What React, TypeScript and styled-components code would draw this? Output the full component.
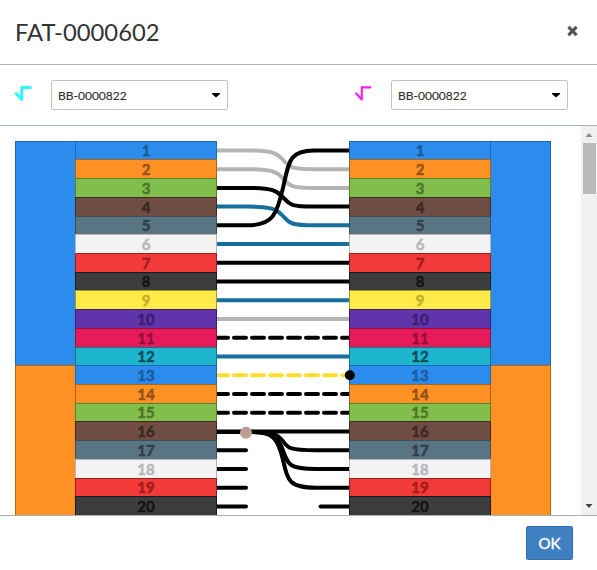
import React from "react";
import styled, { createGlobalStyle } from "styled-components";

const GlobalStyle = createGlobalStyle`
  *, *::before, *::after { box-sizing: border-box; }
  html, body { margin: 0; padding: 0; background: #fff; }
  body { font-family: Lato, "Liberation Sans", sans-serif; color: #333; overflow: hidden; }
`;

const Dialog = styled.div`
  display: flex;
  flex-direction: column;
  width: 597px;
  height: 570px;
  background: #fff;
`;

const Header = styled.header`
  display: flex;
  align-items: center;
  justify-content: space-between;
  flex: none;
  height: 65px;
  padding: 0 17px 0 15px;
  border-bottom: 1px solid #a3b1bd;
`;

const Title = styled.h1`
  margin: 0;
  font-size: 23.8px;
  font-weight: 400;
  line-height: 34px;
  color: #333;
`;

const CloseButton = styled.button`
  display: flex;
  padding: 0;
  margin-bottom: 4px;
  border: 0;
  background: none;
  color: #555;
`;

const Toolbar = styled.div`
  display: grid;
  grid-template-columns: 340px 1fr;
  flex: none;
  height: 61px;
  border-bottom: 1px solid #a3b1bd;
`;

const Picker = styled.div`
  display: flex;
  align-items: center;
  padding-left: 13px;
  gap: 16px;
`;

const Select = styled.button`
  display: flex;
  align-items: center;
  justify-content: space-between;
  width: 177px;
  height: 30px;
  padding: 0 7px 0 6px;
  border: 1px solid #c3c3c3;
  border-radius: 2px;
  background: #fff;
  font: 400 12px Lato, "Liberation Sans", sans-serif;
  -webkit-text-stroke: 0.15px currentColor;
  color: #333;
`;

const Body = styled.main`
  display: flex;
  flex: none;
  justify-content: space-between;
  height: 390px;
  overflow: hidden;
  border-bottom: 1px solid #a3b1bd;
`;

const Splice = styled.div`
  display: grid;
  grid-template-columns: 60px 142px 132px 142px 60px;
  height: 374px;
  margin: 15px 0 0 15px;
  overflow: hidden;
`;

const Column = styled.div`
  display: flex;
  flex-direction: column;
`;

const Tube = styled.div<{ $h: number; $color: string; $edge: string; $side: "left" | "right" }>`
  flex: none;
  height: ${(p) => p.$h}px;
  background: ${(p) => p.$color};
  border-top: 1px solid ${(p) => p.$edge};
  border-${(p) => p.$side}: 1px solid ${(p) => p.$edge};
`;

const Fiber = styled.div<{ $h: number; $color: string; $edge: string; $ink: string }>`
  display: flex;
  align-items: center;
  justify-content: center;
  flex: none;
  height: ${(p) => p.$h}px;
  border: 1px solid ${(p) => p.$edge};
  border-bottom: 0;
  background: ${(p) => p.$color};
  color: ${(p) => p.$ink};
  font-size: 15px;
  font-weight: 700;
  line-height: 17px;
  -webkit-text-stroke: 0.5px currentColor;
`;

const Wires = styled.svg`
  display: block;
  position: relative;
  z-index: 1;
  overflow: visible;
`;

const Scrollbar = styled.div`
  display: flex;
  flex-direction: column;
  align-items: center;
  width: 16px;
  background: #f0f0f0;
`;

const Thumb = styled.div`
  width: 13px;
  height: 51px;
  margin-bottom: auto;
  background: #bababa;
`;

const ScrollArrow = styled.svg`
  flex: none;
  width: 16px;
  height: 17px;
`;

const Footer = styled.footer`
  display: flex;
  justify-content: flex-end;
  padding: 10px 24px 0 0;
`;

const OkButton = styled.button`
  width: 47px;
  height: 34px;
  padding: 0;
  border: 1px solid #2e71b3;
  border-radius: 2px;
  background: #4080c1;
  color: #fff;
  font: 400 15px Lato, "Liberation Sans", sans-serif;
  -webkit-text-stroke: 0.4px currentColor;
`;

type Shade = { color: string; edge: string; ink: string };

const shades: Shade[] = [
  { color: "#2b8ced", edge: "#1f68b2", ink: "#1c5a98" },
  { color: "#ff9024", edge: "#a5651f", ink: "#935316" },
  { color: "#82be4b", edge: "#54852c", ink: "#4d742a" },
  { color: "#704d42", edge: "#3f2b25", ink: "#3a2823" },
  { color: "#597482", edge: "#3a4f5a", ink: "#2f4049" },
  { color: "#f3f3f3", edge: "#b6b6b6", ink: "#b8b8b8" },
  { color: "#f23b38", edge: "#95201e", ink: "#a51a1a" },
  { color: "#3d3d3d", edge: "#1a1a1a", ink: "#141414" },
  { color: "#ffea48", edge: "#a29a2c", ink: "#c2b02c" },
  { color: "#6034ab", edge: "#3c1f70", ink: "#3b1d70" },
  { color: "#e71b5c", edge: "#941039", ink: "#94103a" },
  { color: "#1eb5cf", edge: "#127486", ink: "#0d4e5b" },
];

const PITCH = 18.72;
const rowTop = (i: number) => Math.floor(141.2 + PITCH * i) - 141;
const rows = Array.from({ length: 20 }, (_, i) => ({
  label: i + 1,
  height: rowTop(i + 1) - rowTop(i),
  shade: shades[i % 12],
}));

const mid = (n: number) => 9.4 + 18.74 * (n - 1);

const bend = (from: number, to: number) => {
  const a = mid(from);
  const b = mid(to);
  const d = b - a;
  return `M-1 ${a} H30 C56 ${a} 60 ${a + d * 0.15} 66 ${a + d * 0.5} S72 ${b} 97 ${b} H134`;
};

const branch = (to: number) => {
  const a = mid(16) + 0.6;
  const b = mid(to);
  const d = b - a;
  return `M29 ${a} H36 C56 ${a} 61 ${a + d * 0.12} 66 ${a + d * 0.5} S72 ${b} 99 ${b} H134`;
};

const straight = [
  { n: 6, color: "#176fa0" },
  { n: 7, color: "#000" },
  { n: 8, color: "#000" },
  { n: 9, color: "#176fa0" },
  { n: 10, color: "#b4b4b4" },
  { n: 12, color: "#176fa0" },
  { n: 16, color: "#000" },
];

const dashed = [
  { n: 11, color: "#000" },
  { n: 13, color: "#fadf2c" },
  { n: 14, color: "#000" },
  { n: 15, color: "#000" },
];

const Fibers = () => (
  <Column>
    {rows.map((r) => (
      <Fiber key={r.label} $h={r.height} $color={r.shade.color} $edge={r.shade.edge} $ink={r.shade.ink}>
        {r.label}
      </Fiber>
    ))}
  </Column>
);

const Tubes = ({ side }: { side: "left" | "right" }) => (
  <Column>
    <Tube $h={rowTop(12)} $color={shades[0].color} $edge={shades[0].edge} $side={side} />
    <Tube $h={rowTop(20) - rowTop(12)} $color={shades[1].color} $edge="#b5660f" $side={side} />
  </Column>
);

const Connections = () => (
  <Wires width="132" height="374" fill="none">
    <defs>
      <clipPath id="gap">
        <rect x="0" y="0" width="132" height="374" />
      </clipPath>
    </defs>
    <g clipPath="url(#gap)" strokeWidth="4" strokeLinecap="round">
      <path d={bend(1, 2)} stroke="#b4b4b4" />
      <path d={bend(2, 3)} stroke="#b4b4b4" />
      <path d={bend(4, 5)} stroke="#176fa0" />
      <path d={bend(3, 4)} stroke="#000" />
      <path d={bend(5, 1)} stroke="#000" />
      {straight.map((s) => (
        <path key={s.n} d={`M-1 ${mid(s.n)} H134`} stroke={s.color} />
      ))}
      {dashed.map((s) => (
        <path key={s.n} d={`M-1 ${mid(s.n)} H134`} stroke={s.color} strokeDasharray="12 6" />
      ))}
      <path d={`M-1 ${mid(16) + 0.5} H36`} stroke="#000" />
      {[17, 18, 19].map((n) => (
        <path key={n} d={branch(n)} stroke="#000" />
      ))}
      {[17, 18, 19, 20].map((n) => (
        <path key={n} d={`M-1 ${mid(n)} H29`} stroke="#000" />
      ))}
      <path d={`M103.5 ${mid(20)} H134`} stroke="#000" />
    </g>
    <circle cx="29" cy={mid(16) + 1.2} r="6" fill="#bf9b96" />
    <circle cx="132.8" cy={mid(13)} r="5" fill="#000" />
  </Wires>
);

const RootIcon = ({ color, weight }: { color: string; weight: number }) => (
  <svg width="22" height="22" viewBox="0 0 22 22" fill="none">
    <path
      d="M3.2 9.5L8.8 15.4V3.4H17.3"
      stroke={color}
      strokeWidth={weight}
      strokeLinecap="round"
      strokeLinejoin="round"
    />
  </svg>
);

const CableSelect = ({ name }: { name: string }) => (
  <Select>
    {name}
    <svg width="8" height="5" viewBox="0 0 8 5">
      <path d="M0 0H8V1L4 4.5L0 1Z" fill="#000" />
    </svg>
  </Select>
);

export default function App() {
  return (
    <>
      <GlobalStyle />
      <Dialog>
        <Header>
          <Title>FAT-0000602</Title>
          <CloseButton aria-label="Close">
            <svg width="15" height="15" viewBox="0 0 1792 1792" fill="currentColor">
              <path d="M1490 1322q0 40-28 68l-136 136q-28 28-68 28t-68-28l-294-294-294 294q-28 28-68 28t-68-28l-136-136q-28-28-28-68t28-68l294-294-294-294q-28-28-28-68t28-68l136-136q28-28 68-28t68 28l294 294 294-294q28-28 68-28t68 28l136 136q28 28 28 68t-28 68l-294 294 294 294q28 28 28 68z" />
            </svg>
          </CloseButton>
        </Header>
        <Toolbar>
          <Picker>
            <RootIcon color="#2ff6f8" weight={3} />
            <CableSelect name="BB-0000822" />
          </Picker>
          <Picker>
            <RootIcon color="#f81df3" weight={2.2} />
            <CableSelect name="BB-0000822" />
          </Picker>
        </Toolbar>
        <Body>
          <Splice>
            <Tubes side="left" />
            <Fibers />
            <Connections />
            <Fibers />
            <Tubes side="right" />
          </Splice>
          <Scrollbar>
            <ScrollArrow viewBox="0 0 16 17">
              <path d="M4.5 11L8 7L11.5 11Z" fill="#8b8b8b" />
            </ScrollArrow>
            <Thumb />
            <ScrollArrow viewBox="0 0 16 17">
              <path d="M4.5 6L8 10L11.5 6Z" fill="#444" />
            </ScrollArrow>
          </Scrollbar>
        </Body>
        <Footer>
          <OkButton>OK</OkButton>
        </Footer>
      </Dialog>
    </>
  );
}
